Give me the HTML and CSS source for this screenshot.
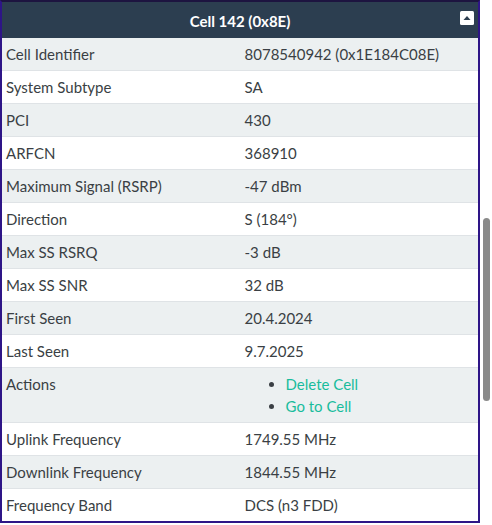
FILE: index.html
```html
<!DOCTYPE html>
<html>
<head>
<meta charset="utf-8">
<link rel="stylesheet" href="styles.css">
</head>
<body>
<div class="page">
  <div class="panel">
    <div class="head">
      <span class="title">Cell 142 (0x8E)</span>
      <span class="toggle"><svg width="14" height="14" viewBox="0 0 14 14"><rect width="14" height="14" rx="1.5" fill="#fff"/><path d="M3.5 9 L7 5 L10.5 9 Z" fill="#2c3e50"/></svg></span>
    </div>
    <table class="info">
      <tr><td>Cell Identifier</td><td>8078540942 (0x1E184C08E)</td></tr>
      <tr><td>System Subtype</td><td>SA</td></tr>
      <tr><td>PCI</td><td>430</td></tr>
      <tr><td>ARFCN</td><td>368910</td></tr>
      <tr><td>Maximum Signal (RSRP)</td><td>-47 dBm</td></tr>
      <tr><td>Direction</td><td>S (184°)</td></tr>
      <tr><td>Max SS RSRQ</td><td>-3 dB</td></tr>
      <tr><td>Max SS SNR</td><td>32 dB</td></tr>
      <tr><td>First Seen</td><td>20.4.2024</td></tr>
      <tr><td>Last Seen</td><td>9.7.2025</td></tr>
      <tr><td>Actions</td><td><ul class="actions"><li><a href="#">Delete Cell</a></li><li><a href="#">Go to Cell</a></li></ul></td></tr>
      <tr><td>Uplink Frequency</td><td>1749.55 MHz</td></tr>
      <tr><td>Downlink Frequency</td><td>1844.55 MHz</td></tr>
      <tr><td>Frequency Band</td><td>DCS (n3 FDD)</td></tr>
    </table>
  </div>
  <div class="track"><div class="thumb"></div></div>
</div>
</body>
</html>
```
FILE: styles.css
```css
html, body {
  margin: 0;
  padding: 0;
  background: #fff;
}
body {
  font-family: Lato, "Liberation Sans", sans-serif;
  font-size: 15px;
  color: #3a3f44;
  width: 492px;
  height: 525px;
  overflow: hidden;
}
.page {
  display: flex;
  align-items: flex-start;
}
.panel {
  width: 478px;
  border: 2px solid #2e1587;
  border-top-color: #1d1440;
  background: #fff;
}
.head {
  background: #2c3e50;
  color: #fff;
  height: 34px;
  padding-top: 2px;
  display: flex;
  align-items: center;
  justify-content: center;
  position: relative;
}
.title {
  font-weight: bold;
  font-size: 15px;
}
.toggle {
  position: absolute;
  right: 4px;
  top: 9px;
  width: 14px;
  height: 14px;
  display: block;
  line-height: 0;
}
.info {
  width: 100%;
  border-collapse: collapse;
  table-layout: fixed;
}
.info td {
  width: 50%;
  padding: 5px 4px;
  line-height: 22px;
  vertical-align: top;
  border-top: 1px solid #dfe3e6;
}
.info td + td {
  padding-left: 5px;
}
.info tr:first-child td {
  border-top: none;
}
.info tr:nth-child(odd) td {
  background: #ecf0f1;
}
.actions {
  margin: 0;
  padding-left: 41px;
}
.actions a {
  color: #18bc9c;
  text-decoration: none;
}
.track {
  width: 10px;
  margin-left: 2px;
}
.thumb {
  margin-top: 218px;
  width: 7px;
  height: 183px;
  margin-left: 1px;
  background: #8a8a8a;
  border-radius: 4px;
}
```
